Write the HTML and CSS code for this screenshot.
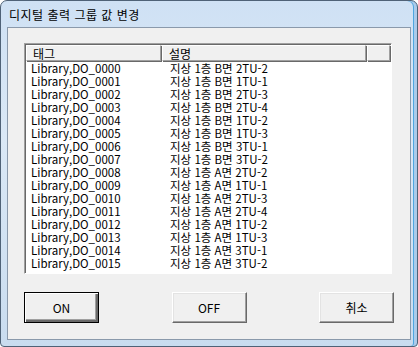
FILE: index.html
```html
<!DOCTYPE html>
<html lang="ko">
<head>
  <meta charset="UTF-8">
  <title>디지털 출력 그룹 값 변경</title>
  <link rel="stylesheet" href="styles.css">
</head>
<body>
  <div class="window">
    <div class="titlebar">디지털 출력 그룹 값 변경</div>
    <div class="client">
      <div class="list">
        <div class="list-header">
          <div class="col col-tag">태그</div>
          <div class="col col-desc">설명</div>
          <div class="col col-fill"></div>
        </div>
        <div class="list-body">
          <div class="cell-tag">Library,DO_0000</div><div class="cell-desc">지상 1층 B면 2TU-2</div>
          <div class="cell-tag">Library,DO_0001</div><div class="cell-desc">지상 1층 B면 1TU-1</div>
          <div class="cell-tag">Library,DO_0002</div><div class="cell-desc">지상 1층 B면 2TU-3</div>
          <div class="cell-tag">Library,DO_0003</div><div class="cell-desc">지상 1층 B면 2TU-4</div>
          <div class="cell-tag">Library,DO_0004</div><div class="cell-desc">지상 1층 B면 1TU-2</div>
          <div class="cell-tag">Library,DO_0005</div><div class="cell-desc">지상 1층 B면 1TU-3</div>
          <div class="cell-tag">Library,DO_0006</div><div class="cell-desc">지상 1층 B면 3TU-1</div>
          <div class="cell-tag">Library,DO_0007</div><div class="cell-desc">지상 1층 B면 3TU-2</div>
          <div class="cell-tag">Library,DO_0008</div><div class="cell-desc">지상 1층 A면 2TU-2</div>
          <div class="cell-tag">Library,DO_0009</div><div class="cell-desc">지상 1층 A면 1TU-1</div>
          <div class="cell-tag">Library,DO_0010</div><div class="cell-desc">지상 1층 A면 2TU-3</div>
          <div class="cell-tag">Library,DO_0011</div><div class="cell-desc">지상 1층 A면 2TU-4</div>
          <div class="cell-tag">Library,DO_0012</div><div class="cell-desc">지상 1층 A면 1TU-2</div>
          <div class="cell-tag">Library,DO_0013</div><div class="cell-desc">지상 1층 A면 1TU-3</div>
          <div class="cell-tag">Library,DO_0014</div><div class="cell-desc">지상 1층 A면 3TU-1</div>
          <div class="cell-tag">Library,DO_0015</div><div class="cell-desc">지상 1층 A면 3TU-2</div>
        </div>
      </div>
      <div class="buttons">
        <button class="button default-button">ON</button>
        <button class="button">OFF</button>
        <button class="button">취소</button>
      </div>
    </div>
  </div>
</body>
</html>
```

FILE: styles.css
```css
body {
  margin: 0;
  font-family: "Noto Sans CJK KR", "Noto Sans", sans-serif;
  font-size: 12px;
  color: #000;
  background: #fff;
}

.window {
  width: 418px;
  height: 347px;
  box-sizing: border-box;
  border: 1px solid #4f6277;
  border-radius: 7px 7px 4px 4px;
  background: linear-gradient(to bottom, #cfe1f4, #dae8f6 40%, #c9dcef);
  box-shadow: inset -3px 0 0 #aacbea, inset -4px 0 0 #4fa6e0;
  display: flex;
  flex-direction: column;
}

.titlebar {
  height: 26px;
  padding-left: 8px;
  line-height: 28px;
  font-size: 12px;
  letter-spacing: 0.5px;
}

.client {
  margin: 0 6px 6px 6px;
  height: 313px;
  box-sizing: border-box;
  border: 1px solid #8a99ab;
  background: #f0f0f0;
  padding: 15px 16px 16px 16px;
  display: flex;
  flex-direction: column;
}

.list {
  width: 368px;
  height: 231px;
  box-sizing: border-box;
  border: 1px solid;
  border-color: #a0a0a0 #fff #fff #a0a0a0;
  box-shadow: inset 1px 1px 0 #696969;
  background: #fff;
  padding: 1px 0 0 1px;
}

.list-header {
  display: flex;
  height: 16px;
  background: #f0f0f0;
}

.col {
  flex: none;
  box-sizing: border-box;
  height: 16px;
  line-height: 15px;
  padding-left: 6px;
  border-top: 1px solid #fff;
  border-left: 1px solid #fff;
  border-right: 1px solid #a0a0a0;
  border-bottom: 1px solid #a0a0a0;
  box-shadow: 1px 1px 0 #696969;
  margin-right: 1px;
}

.col-tag {
  width: 135px;
}

.col-desc {
  width: 204px;
}

.col-fill {
  width: 23px;
}

.list-body {
  padding-top: 1px;
  display: grid;
  grid-template-columns: 144px 1fr;
  grid-auto-rows: 13px;
  line-height: 13px;
  font-size: 11.5px;
  white-space: nowrap;
}

.cell-tag {
  padding-left: 5px;
}

.cell-desc {
  padding-left: 0;
}

.buttons {
  margin-top: 18px;
  display: flex;
  justify-content: space-between;
  width: 370px;
}

.button {
  width: 75px;
  height: 31px;
  box-sizing: border-box;
  font-family: inherit;
  font-size: 12px;
  color: #000;
  background: #f0f0f0;
  border: 1px solid;
  border-color: #fff #696969 #696969 #fff;
  box-shadow: inset -1px -1px 0 #a0a0a0, inset 1px 1px 0 #e3e3e3;
  padding: 0;
}

.default-button {
  border: 1px solid #000;
  box-shadow: inset 1px 1px 0 #fff, inset -2px -2px 0 #696969, inset -3px -3px 0 #a0a0a0;
}
```
